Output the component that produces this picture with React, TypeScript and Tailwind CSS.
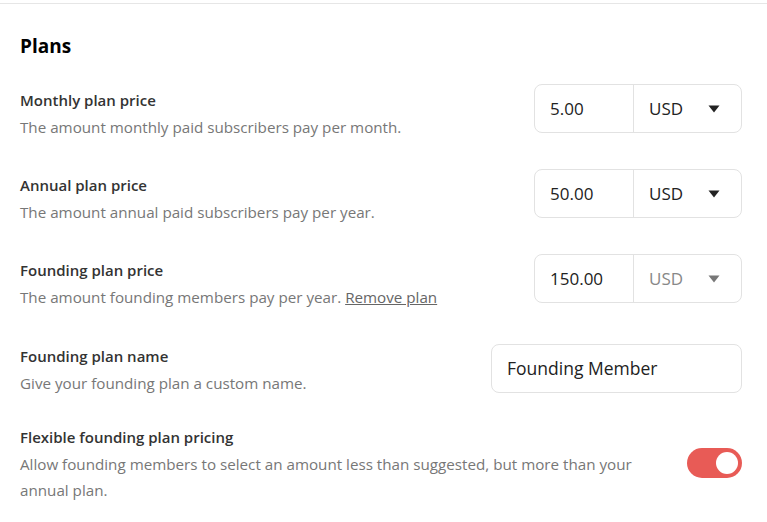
import React from 'react';

function Caret({ muted }: { muted?: boolean }) {
    return (
        <svg width="12" height="8" viewBox="0 0 12 8" className={muted ? 'text-[#777]' : 'text-[#222]'}>
            <path d="M0.5 0.5 L11.5 0.5 L6 7.5 Z" fill="currentColor" />
        </svg>
    );
}

function PriceInput({ value, muted }: { value: string; muted?: boolean }) {
    return (
        <div className="flex h-[49px] w-[208px] shrink-0 items-stretch rounded-lg border border-[#e2e2e2] bg-white">
            <div className="flex w-[99px] items-center border-r border-[#e2e2e2] pl-[15px] text-[17px] text-[#222]">{value}</div>
            <div className="flex flex-1 items-center justify-between pl-[15px] pr-[21px] text-[17px]">
                <span className={muted ? 'text-[#888]' : 'text-[#222]'}>USD</span>
                <Caret muted={muted} />
            </div>
        </div>
    );
}

function Row({ label, children, control, className, top = 'pt-[6px]' }: { label: string; children: React.ReactNode; control: React.ReactNode; className?: string; top?: string }) {
    return (
        <div className={'flex items-start justify-between ' + (className ?? '')}>
            <div className={top}>
                <div className="text-[15px] font-semibold leading-[20px] text-[#333]">{label}</div>
                <div className="mt-[7px] text-[15.2px] leading-[20px] text-[#777]">{children}</div>
            </div>
            {control}
        </div>
    );
}

export default function App() {
    return (
        <div className="h-[522px] w-[767px] overflow-hidden bg-white pt-[3px] font-['Open_Sans',sans-serif]">
            <div className="border-t border-[#e6e6e6] pl-5 pr-[25px]">
                <h1 className="mt-[29px] text-[19px] font-bold leading-[26px] text-black">Plans</h1>
                <div className="mt-[25px] flex flex-col">
                    <Row label="Monthly plan price" control={<PriceInput value="5.00" />}>
                        The amount monthly paid subscribers pay per month.
                    </Row>
                    <Row className="mt-[32px]" label="Annual plan price" control={<PriceInput value="50.00" />}>
                        The amount annual paid subscribers pay per year.
                    </Row>
                    <Row className="mt-[32px]" label="Founding plan price" control={<PriceInput value="150.00" muted />}>
                        The amount founding members pay per year.{' '}
                        <span className="text-[#666] underline">Remove plan</span>
                    </Row>
                    <Row
                        className="mt-[37px]"
                        top="pt-[2px]"
                        label="Founding plan name"
                        control={
                            <div className="flex h-[49px] w-[251px] items-center rounded-lg border border-[#e2e2e2] bg-white pl-[15px] text-[17.5px] text-[#222]">
                                Founding Member
                            </div>
                        }
                    >
                        Give your founding plan a custom name.
                    </Row>
                    <div className="mt-[33px] flex items-start justify-between">
                        <div className="pt-[1px]">
                            <div className="text-[15px] font-semibold leading-[20px] text-[#333]">Flexible founding plan pricing</div>
                            <div className="mt-[4px] w-[640px] text-[15.2px] leading-[26px] text-[#777]">
                                Allow founding members to select an amount less than suggested, but more than your annual plan.
                            </div>
                        </div>
                        <div className="mt-[22px] flex h-[30px] w-[55px] shrink-0 items-center justify-end rounded-full bg-[#e85b56] pr-[4px]">
                            <div className="h-[22px] w-[22px] rounded-full bg-white" />
                        </div>
                    </div>
                </div>
            </div>
        </div>
    );
}
